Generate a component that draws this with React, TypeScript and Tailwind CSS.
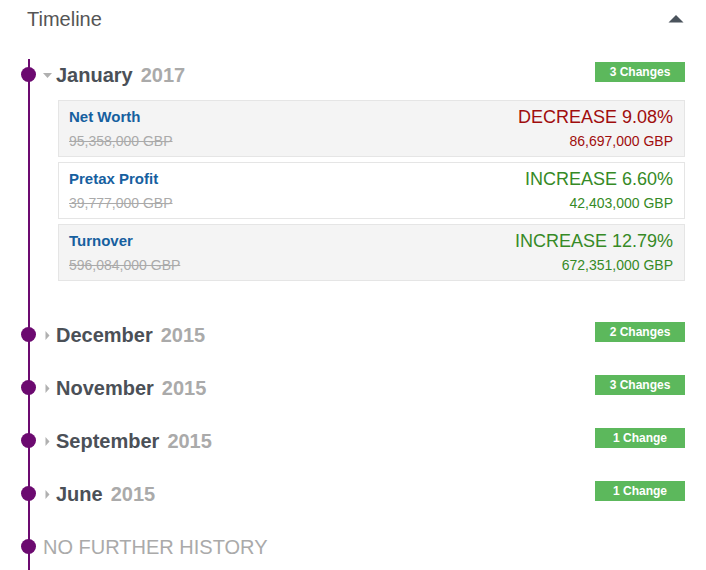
type Metric = {
  name: string;
  before: string;
  after: string;
  direction: "up" | "down";
  pct: string;
};

type Period = {
  month: string;
  year: string;
  changes: number;
  metrics?: Metric[];
};

const periods: Period[] = [
  {
    month: "January",
    year: "2017",
    changes: 3,
    metrics: [
      { name: "Net Worth", before: "95,358,000 GBP", after: "86,697,000 GBP", direction: "down", pct: "9.08%" },
      { name: "Pretax Profit", before: "39,777,000 GBP", after: "42,403,000 GBP", direction: "up", pct: "6.60%" },
      { name: "Turnover", before: "596,084,000 GBP", after: "672,351,000 GBP", direction: "up", pct: "12.79%" },
    ],
  },
  { month: "December", year: "2015", changes: 2 },
  { month: "November", year: "2015", changes: 3 },
  { month: "September", year: "2015", changes: 1 },
  { month: "June", year: "2015", changes: 1 },
];

function Dot() {
  return <span className="absolute -left-[22px] top-[5px] w-[15px] h-[15px] rounded-full bg-[#6c0a70]" />;
}

function MetricCard({ m, shaded }: { m: Metric; shaded: boolean }) {
  const tone = m.direction === "down" ? "text-[#a00d0d]" : "text-[#368a26]";
  return (
    <div
      className={`flex justify-between border border-[#e5e5e5] pl-[10px] pr-[11px] pt-[6px] pb-[6px] ${
        shaded ? "bg-[#f4f4f4]" : "bg-white"
      }`}
    >
      <div>
        <p className="text-[15px] leading-[20px] font-bold text-[#16609f]">{m.name}</p>
        <p className="mt-[5px] text-[14px] leading-[18px] text-[#aaaaaa] line-through">{m.before}</p>
      </div>
      <div className="text-right">
        <p className={`text-[18px] leading-[20px] ${tone}`}>
          {m.direction === "down" ? "DECREASE" : "INCREASE"} {m.pct}
        </p>
        <p className={`mt-[5px] text-[14px] leading-[18px] ${tone}`}>{m.after}</p>
      </div>
    </div>
  );
}

export default function App() {
  return (
    <div
      className="w-[706px] bg-white pl-[27px] pr-[21px] pt-[7px]"
      style={{ fontFamily: '"Liberation Sans", Arial, sans-serif' }}
    >
      <div className="flex items-center justify-between h-[24px]">
        <h2 className="text-[20px] leading-[24px] text-[#555555]">Timeline</h2>
        <svg width="16" height="8" viewBox="0 0 16 8" className="mr-[1px] -mt-[1px]">
          <polygon points="0.5,7.5 8,0 15.5,7.5" fill="#4a535c" />
        </svg>
      </div>

      <div className="mt-[28px] ml-[1px] border-l-2 border-[#6c0a70] pt-[3px] pb-[10px]">
        {periods.map((p) => (
          <div key={p.month + p.year} className="pl-[13px] pb-[27px]">
            <div className="relative flex h-[26px] items-start justify-between">
              <Dot />
              <div className="flex items-center h-[26px] gap-[4px]">
                <span className="flex w-[9px] h-[26px] items-center justify-center">
                  {p.metrics ? (
                    <svg width="9" height="5" viewBox="0 0 9 5">
                      <polygon points="0,0 9,0 4.5,5" fill="#b0b0b0" />
                    </svg>
                  ) : (
                    <svg width="5" height="9" viewBox="0 0 5 9">
                      <polygon points="0.5,0 4.5,4.5 0.5,9" fill="#b0b0b0" />
                    </svg>
                  )}
                </span>
                <span className="flex gap-[8px] text-[20px] leading-[26px] font-bold">
                  <span className="text-[#4b5057]">{p.month}</span>
                  <span className="text-[#aaaaaa]">{p.year}</span>
                </span>
              </div>
              <span className="w-[90px] h-[20px] bg-[#5cb85c] text-center text-[12px] leading-[20px] font-bold text-white">
                {p.changes} {p.changes === 1 ? "Change" : "Changes"}
              </span>
            </div>
            {p.metrics && (
              <div className="ml-[15px] mt-[12px] mb-[14px] flex flex-col gap-[5px]">
                {p.metrics.map((m, i) => (
                  <MetricCard key={m.name} m={m} shaded={i % 2 === 0} />
                ))}
              </div>
            )}
          </div>
        ))}
        <div className="pl-[13px]">
          <div className="relative h-[26px]">
            <Dot />
            <span className="text-[20px] leading-[26px] text-[#aaaaaa]">NO FURTHER HISTORY</span>
          </div>
        </div>
      </div>
    </div>
  );
}
